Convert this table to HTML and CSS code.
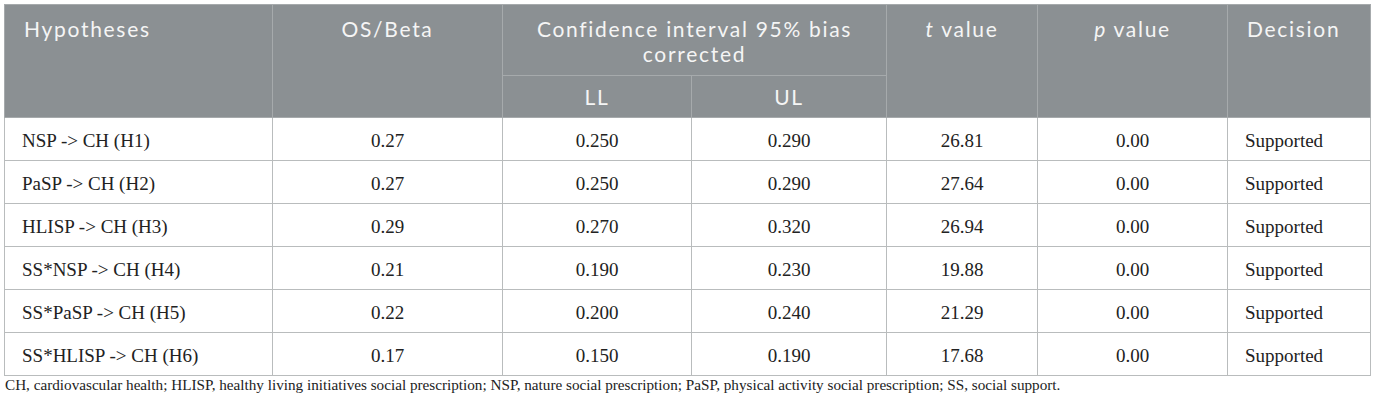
FILE: index.html
```html
<!DOCTYPE html>
<html lang="en">
<head>
<meta charset="utf-8">
<title>Hypotheses table</title>
<link rel="stylesheet" href="styles.css">
</head>
<body>
<div class="wrap">
<table class="results">
  <colgroup>
    <col class="c1"><col class="c2"><col class="c3"><col class="c4"><col class="c5"><col class="c6"><col class="c7">
  </colgroup>
  <thead>
    <tr class="h1">
      <th rowspan="2" class="left">Hypotheses</th>
      <th rowspan="2">OS/Beta</th>
      <th colspan="2" class="span">Confidence interval 95% bias<br>corrected</th>
      <th rowspan="2"><i>t</i> value</th>
      <th rowspan="2"><i>p</i> value</th>
      <th rowspan="2" class="left">Decision</th>
    </tr>
    <tr class="h2">
      <th>LL</th>
      <th>UL</th>
    </tr>
  </thead>
  <tbody>
    <tr><td class="left">NSP -&gt; CH (H1)</td><td>0.27</td><td>0.250</td><td>0.290</td><td>26.81</td><td>0.00</td><td class="left">Supported</td></tr>
    <tr><td class="left">PaSP -&gt; CH (H2)</td><td>0.27</td><td>0.250</td><td>0.290</td><td>27.64</td><td>0.00</td><td class="left">Supported</td></tr>
    <tr><td class="left">HLISP -&gt; CH (H3)</td><td>0.29</td><td>0.270</td><td>0.320</td><td>26.94</td><td>0.00</td><td class="left">Supported</td></tr>
    <tr><td class="left">SS*NSP -&gt; CH (H4)</td><td>0.21</td><td>0.190</td><td>0.230</td><td>19.88</td><td>0.00</td><td class="left">Supported</td></tr>
    <tr><td class="left">SS*PaSP -&gt; CH (H5)</td><td>0.22</td><td>0.200</td><td>0.240</td><td>21.29</td><td>0.00</td><td class="left">Supported</td></tr>
    <tr><td class="left">SS*HLISP -&gt; CH (H6)</td><td>0.17</td><td>0.150</td><td>0.190</td><td>17.68</td><td>0.00</td><td class="left">Supported</td></tr>
  </tbody>
</table>
<p class="note">CH, cardiovascular health; HLISP, healthy living initiatives social prescription; NSP, nature social prescription; PaSP, physical activity social prescription; SS, social support.</p>
</div>
</body>
</html>
```
FILE: styles.css
```css
html, body {
  margin: 0;
  padding: 0;
  background: #ffffff;
}
.wrap {
  padding: 4px 0 0 4px;
}
.results {
  border-collapse: collapse;
  table-layout: fixed;
  width: 1366px;
  border: 1px solid #b9bcbd;
}
.c1 { width: 268px; }
.c2 { width: 230px; }
.c3 { width: 189px; }
.c4 { width: 195px; }
.c5 { width: 151px; }
.c6 { width: 190px; }
.c7 { width: 143px; }
thead th {
  background: #8b9093;
  color: #f5f5f5;
  font-family: Lato, "Open Sans", sans-serif;
  font-weight: 400;
  font-size: 21px;
  letter-spacing: 1.7px;
  line-height: 25px;
  text-align: center;
  vertical-align: top;
  border: 1px solid #a6aaac;
  padding: 0 14px;
}
thead tr.h1 th { height: 59px; padding-top: 11px; }
thead tr.h2 th { height: 41px; vertical-align: middle; }
thead th.left { text-align: left; padding-left: 19px; }
thead th i { font-style: italic; }
tbody td {
  font-family: "Liberation Serif", "Times New Roman", serif;
  font-size: 19px;
  color: #222222;
  text-align: center;
  vertical-align: middle;
  height: 38px;
  padding: 4px 16px 0;
  border: 1px solid #b9bcbd;
}
tbody td.left { text-align: left; padding-left: 17px; }
.note {
  margin: 0 0 0 1px;
  font-family: "Liberation Serif", "Times New Roman", serif;
  font-size: 15.2px;
  line-height: 18px;
  color: #222222;
}
```
